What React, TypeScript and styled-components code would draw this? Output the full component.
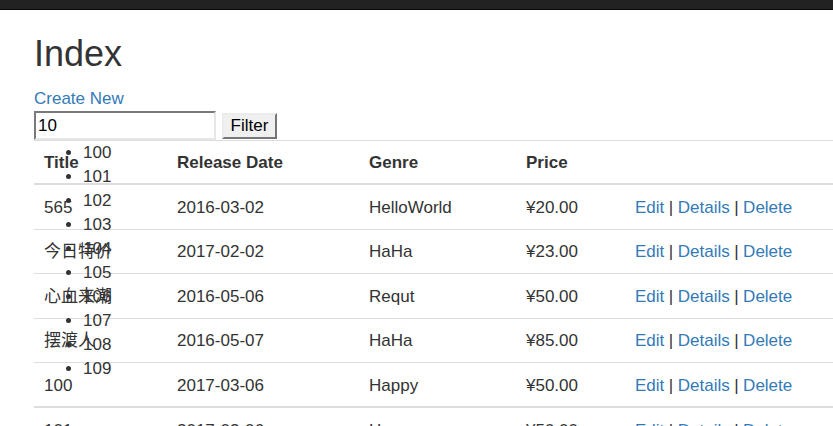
import styled, { createGlobalStyle } from "styled-components";

const GlobalStyle = createGlobalStyle`
  html, body {
    margin: 0;
    padding: 0;
    overflow: hidden;
    background: #fff;
  }
  body {
    font-family: "Liberation Sans", Arial, "Noto Sans CJK SC", sans-serif;
    font-size: 17px;
    line-height: 24px;
    color: #333;
  }
`

const NavBar = styled.div`
  height: 9px;
  background-color: #222;
  border-bottom: 1px solid #080808;
`

const Container = styled.div`
  padding-left: 34px;
`

const Heading = styled.h1`
  margin: 24.4px 0 13.4px;
  font-size: 36px;
  font-weight: 500;
  line-height: 1.1;
  color: #333;
`

const Link = styled.a`
  color: #337ab7;
  text-decoration: none;
  cursor: pointer;
`

const FilterForm = styled.form`
  position: relative;
  display: flex;
  align-items: center;
  height: 29px;
  margin: 0;
`

const SearchInput = styled.input`
  box-sizing: border-box;
  width: 182px;
  height: 29px;
  padding: 1px 2px;
  border: 2px solid;
  border-color: #7a7a7a #e6e6e6 #e6e6e6 #7a7a7a;
  outline: none;
  font-family: inherit;
  font-size: 17px;
  color: #000;
  background: #fff;
`

const FilterButton = styled.button`
  box-sizing: border-box;
  height: 26px;
  width: 55px;
  margin-left: 6px;
  padding: 0;
  border: 2px solid;
  border-color: #ececec #767676 #767676 #ececec;
  background-color: #f0f0f0;
  font-family: inherit;
  font-size: 17px;
  color: #000;
`

const Suggestions = styled.ul`
  position: absolute;
  top: 100%;
  left: 0;
  margin: 1px 0 0;
  padding-left: 49px;
  list-style: disc;
  line-height: 24px;
  z-index: 2;
`

const Table = styled.table`
  width: 1000px;
  border-collapse: collapse;
  border-spacing: 0;
  table-layout: fixed;
`

const HeadCell = styled.th<{ $width?: number }>`
  box-sizing: border-box;
  width: ${props => props.$width ? `${props.$width}px` : 'auto'};
  padding: 10px 10px 8px;
  text-align: left;
  font-weight: bold;
  border-top: 1px solid #ddd;
  border-bottom: 2px solid #ddd;
`

const Row = styled.tr<{ $thick?: boolean }>`
  & > td {
    border-top: ${props => props.$thick ? '2px' : '1px'} solid #ddd;
  }
`

const Cell = styled.td`
  padding: 10.7px 10px 8.7px;
  vertical-align: top;
  white-space: nowrap;
`

const Pipe = styled.span`
  margin: 0 4.5px;
`

const movies = [
  { title: '565', date: '2016-03-02', genre: 'HelloWorld', price: '¥20.00' },
  { title: '今日特价', date: '2017-02-02', genre: 'HaHa', price: '¥23.00' },
  { title: '心血来潮', date: '2016-05-06', genre: 'Requt', price: '¥50.00' },
  { title: '摆渡人', date: '2016-05-07', genre: 'HaHa', price: '¥85.00' },
  { title: '100', date: '2017-03-06', genre: 'Happy', price: '¥50.00' },
  { title: '101', date: '2017-03-06', genre: 'Happy', price: '¥50.00' },
  { title: '102', date: '2017-03-06', genre: 'Happy', price: '¥50.00' },
]

const suggestions = ['100', '101', '102', '103', '104', '105', '106', '107', '108', '109']

const App = () => {
  return (
    <>
      <GlobalStyle />
      <NavBar />
      <Container>
        <Heading>Index</Heading>
        <div>
          <Link>Create New</Link>
        </div>
        <FilterForm onSubmit={e => e.preventDefault()}>
          <SearchInput type="text" defaultValue="10" />
          <FilterButton type="submit">Filter</FilterButton>
          <Suggestions>
            {suggestions.map(item => <li key={item}>{item}</li>)}
          </Suggestions>
        </FilterForm>
        <Table>
          <thead>
            <tr>
              <HeadCell $width={133}>Title</HeadCell>
              <HeadCell $width={192}>Release Date</HeadCell>
              <HeadCell $width={157}>Genre</HeadCell>
              <HeadCell $width={109}>Price</HeadCell>
              <HeadCell />
            </tr>
          </thead>
          <tbody>
            {movies.map((movie, index) => (
              <Row key={index} $thick={index === 5}>
                <Cell>{movie.title}</Cell>
                <Cell>{movie.date}</Cell>
                <Cell>{movie.genre}</Cell>
                <Cell>{movie.price}</Cell>
                <Cell>
                  <Link>Edit</Link><Pipe>|</Pipe>
                  <Link>Details</Link><Pipe>|</Pipe>
                  <Link>Delete</Link>
                </Cell>
              </Row>
            ))}
          </tbody>
        </Table>
      </Container>
    </>
  )
}

export default App
